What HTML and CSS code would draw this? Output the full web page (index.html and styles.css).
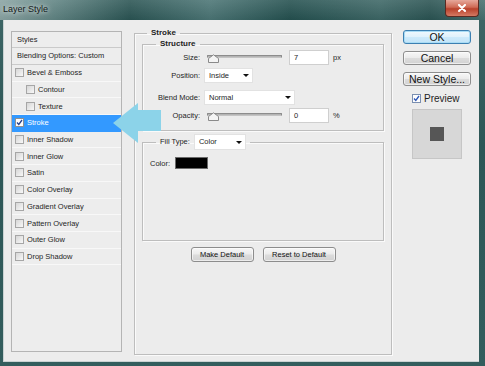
FILE: index.html
```html
<!DOCTYPE html>
<html lang="en">
<head>
    <meta charset="UTF-8">
    <title>Layer Style</title>
    <link rel="stylesheet" href="styles.css">
</head>
<body>
    <div class="window">
        <div class="titlebar">
            <span class="title">Layer Style</span>
            <span class="close-btn">
                <svg width="10" height="8" viewBox="0 0 10 8"><path d="M2 1 L8 7 M8 1 L2 7" stroke="#fff" stroke-width="2" stroke-linecap="round"/></svg>
            </span>
        </div>

        <div class="client">
            <div class="styles-panel">
                <div class="styles-head">Styles</div>
                <div class="styles-head">Blending Options: Custom</div>
                <div class="style-row"><span class="cb"></span>Bevel &amp; Emboss</div>
                <div class="style-row sub"><span class="cb"></span>Contour</div>
                <div class="style-row sub"><span class="cb"></span>Texture</div>
                <div class="style-row active"><span class="cb checked"><svg width="7" height="7" viewBox="0 0 7 7"><path d="M1 3.5 L2.8 5.5 L6 1" fill="none" stroke="#27408b" stroke-width="1.3"/></svg></span>Stroke</div>
                <div class="style-row"><span class="cb"></span>Inner Shadow</div>
                <div class="style-row"><span class="cb"></span>Inner Glow</div>
                <div class="style-row"><span class="cb"></span>Satin</div>
                <div class="style-row"><span class="cb"></span>Color Overlay</div>
                <div class="style-row"><span class="cb"></span>Gradient Overlay</div>
                <div class="style-row"><span class="cb"></span>Pattern Overlay</div>
                <div class="style-row"><span class="cb"></span>Outer Glow</div>
                <div class="style-row"><span class="cb"></span>Drop Shadow</div>
            </div>

            <fieldset class="group stroke-group">
                <legend>Stroke</legend>

                <fieldset class="group structure">
                    <legend>Structure</legend>
                    <div class="row">
                        <span class="row-label">Size:</span>
                        <div class="slider">
                            <div class="track"></div>
                            <svg class="thumb" width="11" height="9" viewBox="0 0 11 9"><path d="M0.5 8.5 L0.5 4.5 L5.5 0.8 L10.5 4.5 L10.5 8.5 Z" fill="#f4f4f4" stroke="#8a8a8a"/></svg>
                        </div>
                        <div class="field">7</div>
                        <span class="unit">px</span>
                    </div>
                    <div class="row">
                        <span class="row-label">Position:</span>
                        <div class="select select-pos">Inside</div>
                    </div>
                    <div class="row spaced">
                        <span class="row-label">Blend Mode:</span>
                        <div class="select select-blend">Normal</div>
                    </div>
                    <div class="row">
                        <span class="row-label">Opacity:</span>
                        <div class="slider">
                            <div class="track"></div>
                            <svg class="thumb" width="11" height="9" viewBox="0 0 11 9"><path d="M0.5 8.5 L0.5 4.5 L5.5 0.8 L10.5 4.5 L10.5 8.5 Z" fill="#f4f4f4" stroke="#8a8a8a"/></svg>
                        </div>
                        <div class="field">0</div>
                        <span class="unit">%</span>
                    </div>
                </fieldset>

                <fieldset class="group fill">
                    <legend><span>Fill Type:</span><span class="select select-fill">Color</span></legend>
                    <div class="color-row">
                        <span>Color:</span>
                        <span class="swatch"></span>
                    </div>
                </fieldset>

                <div class="defaults">
                    <button class="btn small make">Make Default</button>
                    <button class="btn small reset">Reset to Default</button>
                </div>
            </fieldset>

            <div class="side">
                <button class="btn ok">OK</button>
                <button class="btn">Cancel</button>
                <button class="btn">New Style...</button>
                <div class="preview-check">
                    <span class="cb checked blue"><svg width="7" height="7" viewBox="0 0 7 7"><path d="M1 3.5 L2.8 5.5 L6 1" fill="none" stroke="#2b55b5" stroke-width="1.3"/></svg></span>Preview
                </div>
                <div class="preview-box"><span class="preview-square"></span></div>
            </div>
        </div>

        <!-- callout arrow pointing at the selected style -->
        <svg class="arrow" width="52" height="46" viewBox="0 0 52 46">
            <polygon points="1,23 26,3 26,10 49,10 49,31 26,31 26,43" fill="#8cd3e9"/>
        </svg>
    </div>
</body>
</html>
```

FILE: styles.css
```css
body {
    margin: 0;
    width: 485px;
    height: 366px;
    overflow: hidden;
    font-family: "Liberation Sans", Arial, sans-serif;
    font-size: 7.5px;
    color: #1e1e1e;
}

.window {
    position: relative;
    height: 366px;
    display: flex;
    flex-direction: column;
    background: linear-gradient(180deg, #3f6767, #2c5656 40%, #335d5d);
}

.titlebar {
    height: 20px;
    flex: none;
    display: flex;
    justify-content: space-between;
    align-items: flex-start;
    padding: 0 6px 0 3px;
    background:
        linear-gradient(180deg, rgba(255, 255, 255, 0.12), rgba(0, 0, 0, 0.05)),
        linear-gradient(90deg, #8aa4a3 0, #5f8382 55px, #2a5453 130px, #4a7474 210px, #24504f 290px, #3c6665 380px, #2a5352 430px, #46706f 485px);
}

.title {
    font-size: 9px;
    line-height: 18px;
    color: #141a1a;
    text-shadow: 0 0 4px rgba(255, 255, 255, 0.8), 0 0 8px rgba(255, 255, 255, 0.5);
}

.close-btn {
    width: 34px;
    height: 17px;
    box-sizing: border-box;
    display: flex;
    align-items: center;
    justify-content: center;
    border: 1px solid #5a2a22;
    border-top: none;
    border-radius: 0 0 4px 4px;
    background: linear-gradient(180deg, #e6a89b, #cf6a55 45%, #b8412b 55%, #d47a63);
}

.client {
    flex: 1;
    margin: 0 6px 4px 3px;
    display: flex;
    align-items: flex-start;
    padding: 8px 0 0 8px;
    background: #ececec;
    box-shadow: inset 1px 0 0 #c9d2d2, inset 0 -1px 0 #c9d2d2;
}

/* left list of styles */
.styles-panel {
    width: 111px;
    height: 321px;
    margin-top: 3px;
    box-sizing: border-box;
    border: 1px solid #b4b4b4;
    background: #ededed;
    flex: none;
}

.styles-head {
    height: 17px;
    line-height: 16px;
    padding-left: 5px;
    border-bottom: 1px solid #cacaca;
    box-sizing: border-box;
}

.styles-head:first-child {
    height: 16px;
}

.style-row {
    height: 16.7px;
    display: flex;
    align-items: center;
    padding-left: 3px;
    box-sizing: border-box;
    border-bottom: 1px solid #f8f8f8;
}

.style-row.sub {
    padding-left: 14px;
}

.style-row.active {
    background: #3399ff;
    color: #fff;
    border-bottom-color: #3399ff;
}

.cb {
    width: 9px;
    height: 9px;
    box-sizing: border-box;
    border: 1px solid #a6a6a6;
    background: linear-gradient(135deg, #d6d6d6, #f8f8f8);
    margin-right: 3px;
    display: inline-flex;
    align-items: center;
    justify-content: center;
    flex: none;
}

.cb.checked {
    background: #fdfdfd;
    border-color: #8f8f8f;
}

.cb.blue {
    border-color: #7a8fb0;
}

/* group boxes */
.group {
    margin: 0;
    min-width: 0;
    border: 1px solid #bdbdbd;
    box-shadow: 1px 1px 0 #fafafa, inset 1px 1px 0 #fafafa;
    box-sizing: border-box;
}

.group > legend {
    font-weight: bold;
    font-size: 8px;
    line-height: 10px;
    height: 10px;
    padding: 0 4px;
}

.stroke-group {
    width: 258px;
    height: 327px;
    margin-left: 12px;
    padding: 1px 7px 0 7px;
    flex: none;
}

.stroke-group > legend {
    margin-left: 5px;
}

.structure {
    padding: 1px 0 7px 7px;
}

.structure > legend {
    margin-left: 6px;
}

.row {
    display: flex;
    align-items: center;
    height: 15px;
}

.row + .row {
    margin-top: 3px;
}

.row + .row.spaced {
    margin-top: 7px;
}

.row-label {
    width: 50px;
    text-align: right;
    flex: none;
}

.slider {
    position: relative;
    width: 75px;
    height: 15px;
    margin-left: 7px;
    flex: none;
}

.track {
    margin-top: 5px;
    height: 3px;
    box-sizing: border-box;
    border: 1px solid #8c8c8c;
    border-bottom-color: #c4c4c4;
    background: #b4b4b4;
    border-radius: 1px;
}

.thumb {
    position: absolute;
    left: 1px;
    top: 4px;
}

.field {
    width: 40px;
    height: 15px;
    margin-left: 7px;
    box-sizing: border-box;
    border: 1px solid #cfcfcf;
    background: #fff;
    padding-left: 4px;
    line-height: 13px;
}

.unit {
    margin-left: 4px;
}

.select {
    display: flex;
    align-items: center;
    justify-content: space-between;
    height: 15px;
    margin-left: 4px;
    padding: 0 3px 0 4px;
    box-sizing: border-box;
    background: #fff;
    border: 1px solid #e2e2e2;
}

.select::after {
    content: "";
    border-top: 3px solid #111;
    border-left: 3px solid transparent;
    border-right: 3px solid transparent;
}

.select-pos {
    width: 49px;
}

.select-blend {
    width: 91px;
}

.fill {
    height: 107px;
    margin-top: 3px;
    padding: 7px 7px 0 7px;
}

.fill > legend {
    display: flex;
    align-items: center;
    height: 16px;
    margin-left: 6px;
    font-weight: normal;
    font-size: 7.5px;
}

.select-fill {
    width: 52px;
    height: 16px;
}

.color-row {
    display: flex;
    align-items: center;
    height: 12px;
}

.swatch {
    width: 33px;
    height: 12px;
    margin-left: 5px;
    box-sizing: border-box;
    background: #000;
    border: 1px solid #6a6a6a;
}

.defaults {
    display: flex;
    justify-content: center;
    gap: 9px;
    margin-top: 6px;
}

/* buttons */
.btn {
    font-family: "Liberation Sans", Arial, sans-serif;
    font-size: 10.5px;
    color: #111;
    height: 14px;
    padding: 0;
    line-height: 12px;
    border: 1px solid #8d8d8d;
    border-radius: 3px;
    background: linear-gradient(180deg, #f7f7f7, #ebebeb 48%, #dcdcdc 52%, #d2d2d2);
    box-shadow: inset 0 0 0 1px rgba(255, 255, 255, 0.6);
}

.btn.small {
    font-size: 7.5px;
    height: 15px;
    line-height: 13px;
}

.make {
    width: 63px;
}

.reset {
    width: 73px;
}

.side {
    width: 68px;
    margin: 2px 0 0 11px;
    display: flex;
    flex-direction: column;
    flex: none;
}

.side .btn {
    width: 68px;
}

.side .btn + .btn {
    margin-top: 7px;
}

.btn.ok {
    border-color: #3c7fb1;
    background: linear-gradient(180deg, #f0f9fe, #e1f2fc 48%, #cdeafb 52%, #c2e4f8);
    box-shadow: inset 0 0 0 1px #a9dcf5;
}

.preview-check {
    display: flex;
    align-items: center;
    margin: 8px 0 0 9px;
    font-size: 10px;
    height: 9px;
}

.preview-check .cb {
    margin-right: 3px;
}

.preview-box {
    width: 50px;
    height: 50px;
    margin: 6px 0 0 9px;
    box-sizing: border-box;
    border: 1px solid #c6c6c6;
    background: #d7d7d7;
    display: flex;
    align-items: center;
    justify-content: center;
}

.preview-square {
    width: 14px;
    height: 14px;
    background: #565656;
}

.arrow {
    position: absolute;
    left: 112px;
    top: 100px;
}
```
